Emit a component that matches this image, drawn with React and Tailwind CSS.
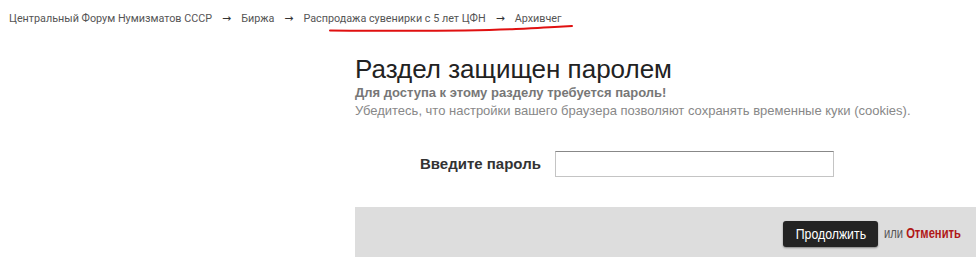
export default function App() {
  return (
    <div className="w-[976px] h-[257px] overflow-hidden bg-white font-['Liberation_Sans',Arial,sans-serif]">
      <div className="relative pt-[12px] pl-[9px] text-[10.8px] leading-[14px] text-[#555] font-['Roboto',sans-serif]">
        <span>Центральный Форум Нумизматов СССР</span>
        <span className="mx-[10px] text-[#333] font-['DejaVu_Sans',sans-serif]">→</span>
        <span>Биржа</span>
        <span className="mx-[10px] text-[#333] font-['DejaVu_Sans',sans-serif]">→</span>
        <span>Распродажа сувенирки с 5 лет ЦФН</span>
        <span className="mx-[10px] text-[#333] font-['DejaVu_Sans',sans-serif]">→</span>
        <span>Архивчег</span>
        <svg className="absolute left-[326px] top-[23px]" width="250" height="10" viewBox="0 0 250 10">
          <path d="M4 7.5 C 60 8, 140 8.5, 190 6 S 235 3.5, 246 3" stroke="#e01010" strokeWidth="2" fill="none" strokeLinecap="round" />
        </svg>
      </div>

      <div className="ml-[355px] mt-[28px]">
        <h1 className="text-[26px] leading-[30px] text-[#222]">Раздел защищен паролем</h1>
        <p className="text-[13px] leading-[18px] font-bold text-[#777]">Для доступа к этому разделу требуется пароль!</p>
        <p className="text-[13px] leading-[18px] text-[#888]">Убедитесь, что настройки вашего браузера позволяют сохранять временные куки (cookies).</p>

        <div className="flex items-center mt-[31px] ml-[65px]">
          <label className="w-[135px] text-[15px] font-bold text-[#333]">Введите пароль</label>
          <input type="password" className="w-[279px] h-[26px] border border-[#c4c4c4] border-t-[#888] bg-white outline-none" />
        </div>

        <div className="mt-[30px] h-[51px] bg-[#dddddd] flex items-center pt-[2px]">
          <button className="ml-[428px] shrink-0 h-[26px] w-[95px] rounded-[3px] bg-[#232323] text-white shadow-[0_1px_2px_rgba(0,0,0,0.4)] flex items-center justify-center overflow-hidden">
            <span className="inline-block text-[15px] leading-[26px] scale-x-[0.82]">Продолжить</span>
          </button>
          <span className="ml-[6px] inline-block origin-left scale-x-[0.8] whitespace-nowrap text-[14px] text-[#555]">
            или <a className="font-bold text-[#b01818]">Отменить</a>
          </span>
        </div>
      </div>
    </div>
  )
}
